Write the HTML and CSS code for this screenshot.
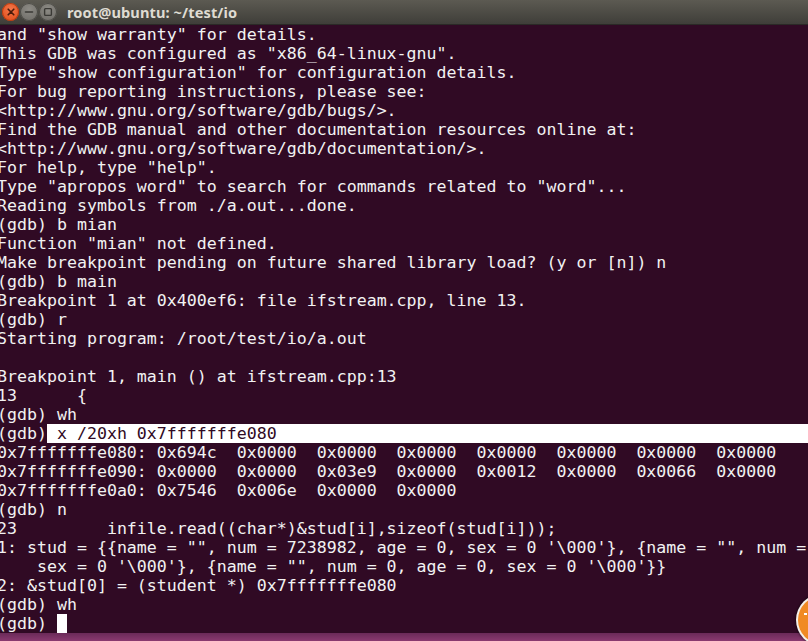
FILE: index.html
```html
<!DOCTYPE html>
<html>
<head>
<meta charset="utf-8">
<link rel="stylesheet" href="styles.css">
</head>
<body>
<div class="window">
  <div class="titlebar">
    <div class="btns">
      <span class="btn close"><svg width="18" height="18" viewBox="0 0 18 18"><path d="M6.2 6.2 L11.8 11.8 M11.8 6.2 L6.2 11.8" stroke="#4a1a0a" stroke-width="1.6" stroke-linecap="round"/></svg></span>
      <span class="btn"><svg width="18" height="18" viewBox="0 0 18 18"><path d="M5.5 9 H12.5" stroke="#3a3935" stroke-width="1.6" stroke-linecap="round"/></svg></span>
      <span class="btn"><svg width="18" height="18" viewBox="0 0 18 18"><rect x="5.6" y="5.6" width="6.8" height="6.8" rx="0.8" fill="none" stroke="#3a3935" stroke-width="1.4"/></svg></span>
    </div>
    <div class="title">root@ubuntu: ~/test/io</div>
  </div>
  <div class="term">
    <div class="ln">and "show warranty" for details.</div>
    <div class="ln">This GDB was configured as "x86_64-linux-gnu".</div>
    <div class="ln">Type "show configuration" for configuration details.</div>
    <div class="ln">For bug reporting instructions, please see:</div>
    <div class="ln">&lt;http://www.gnu.org/software/gdb/bugs/&gt;.</div>
    <div class="ln">Find the GDB manual and other documentation resources online at:</div>
    <div class="ln">&lt;http://www.gnu.org/software/gdb/documentation/&gt;.</div>
    <div class="ln">For help, type "help".</div>
    <div class="ln">Type "apropos word" to search for commands related to "word"...</div>
    <div class="ln">Reading symbols from ./a.out...done.</div>
    <div class="ln">(gdb) b mian</div>
    <div class="ln">Function "mian" not defined.</div>
    <div class="ln">Make breakpoint pending on future shared library load? (y or [n]) n</div>
    <div class="ln">(gdb) b main</div>
    <div class="ln">Breakpoint 1 at 0x400ef6: file ifstream.cpp, line 13.</div>
    <div class="ln">(gdb) r</div>
    <div class="ln">Starting program: /root/test/io/a.out</div>
    <div class="ln"> </div>
    <div class="ln">Breakpoint 1, main () at ifstream.cpp:13</div>
    <div class="ln">13      {</div>
    <div class="ln">(gdb) wh</div>
    <div class="ln sel-line"><span>(gdb)</span><span class="sel"> x /20xh 0x7fffffffe080</span></div>
    <div class="ln">0x7fffffffe080: 0x694c  0x0000  0x0000  0x0000  0x0000  0x0000  0x0000  0x0000</div>
    <div class="ln">0x7fffffffe090: 0x0000  0x0000  0x03e9  0x0000  0x0012  0x0000  0x0066  0x0000</div>
    <div class="ln">0x7fffffffe0a0: 0x7546  0x006e  0x0000  0x0000</div>
    <div class="ln">(gdb) n</div>
    <div class="ln">23         infile.read((char*)&amp;stud[i],sizeof(stud[i]));</div>
    <div class="ln">1: stud = {{name = "", num = 7238982, age = 0, sex = 0 '\000'}, {name = "", num =</div>
    <div class="ln">    sex = 0 '\000'}, {name = "", num = 0, age = 0, sex = 0 '\000'}}</div>
    <div class="ln">2: &amp;stud[0] = (student *) 0x7fffffffe080</div>
    <div class="ln">(gdb) wh</div>
    <div class="ln">(gdb) <span class="cursor"> </span></div>
  </div>
  <div class="panel"></div>
  <div class="launcher-btn"><span class="mark"></span></div>
</div>
</body>
</html>
```
FILE: styles.css
```css
html, body {
  margin: 0;
  padding: 0;
  background: #300a24;
  overflow: hidden;
}
.window {
  position: relative;
  width: 808px;
  height: 641px;
  overflow: hidden;
  display: flex;
  flex-direction: column;
}
.titlebar {
  height: 24px;
  flex: none;
  display: flex;
  align-items: center;
  background: linear-gradient(#5c5a52, #3f3e39);
  border-bottom: 1px solid #2a2926;
}
.btns {
  display: flex;
  gap: 1px;
  margin-left: 2px;
}
.btn {
  width: 18px;
  height: 18px;
  border-radius: 50%;
  background: radial-gradient(circle at 50% 35%, #8d8b85, #6a6863);
  box-shadow: inset 0 0 0 1px #4c4b46;
  display: block;
}
.btn svg { display: block; }
.btn.close {
  width: 17px;
  background: radial-gradient(circle at 50% 35%, #f3774a, #dd4814);
  box-shadow: inset 0 0 0 1px #b63c12;
}
.title {
  margin-left: 10px;
  font-family: "Noto Sans", "Open Sans", sans-serif;
  font-weight: bold;
  font-size: 14.6px;
  color: #dfdbd2;
  letter-spacing: 0.1px;
  white-space: nowrap;
  margin-top: -1px;
}
.term {
  flex: none;
  height: 608px;
  margin-left: -3px;
  font-family: "DejaVu Sans Mono", monospace;
  font-size: 16.6px;
  line-height: 19px;
  color: #f2f2f2;
}
.ln {
  height: 19px;
  white-space: pre;
}
.sel-line {
  display: flex;
}
.sel {
  flex: 1;
  background: #ffffff;
  color: #300a24;
}
.cursor {
  display: inline-block;
  width: 10px;
  height: 19px;
  background: #ffffff;
  vertical-align: top;
}
.panel {
  flex: 1;
  background: linear-gradient(#6a2a58, #8a3a70);
}
.launcher-btn {
  position: absolute;
  left: 798px;
  top: 596px;
  width: 48px;
  height: 48px;
  border-radius: 50%;
  background: #f08a24;
  box-shadow: 0 0 0 2px #f4f0ea, 0 0 2px 3px rgba(0,0,0,0.4);
}
.mark {
  position: absolute;
  left: 6px;
  top: 17px;
  width: 3px;
  height: 1.5px;
  background: #fff;
}
```
